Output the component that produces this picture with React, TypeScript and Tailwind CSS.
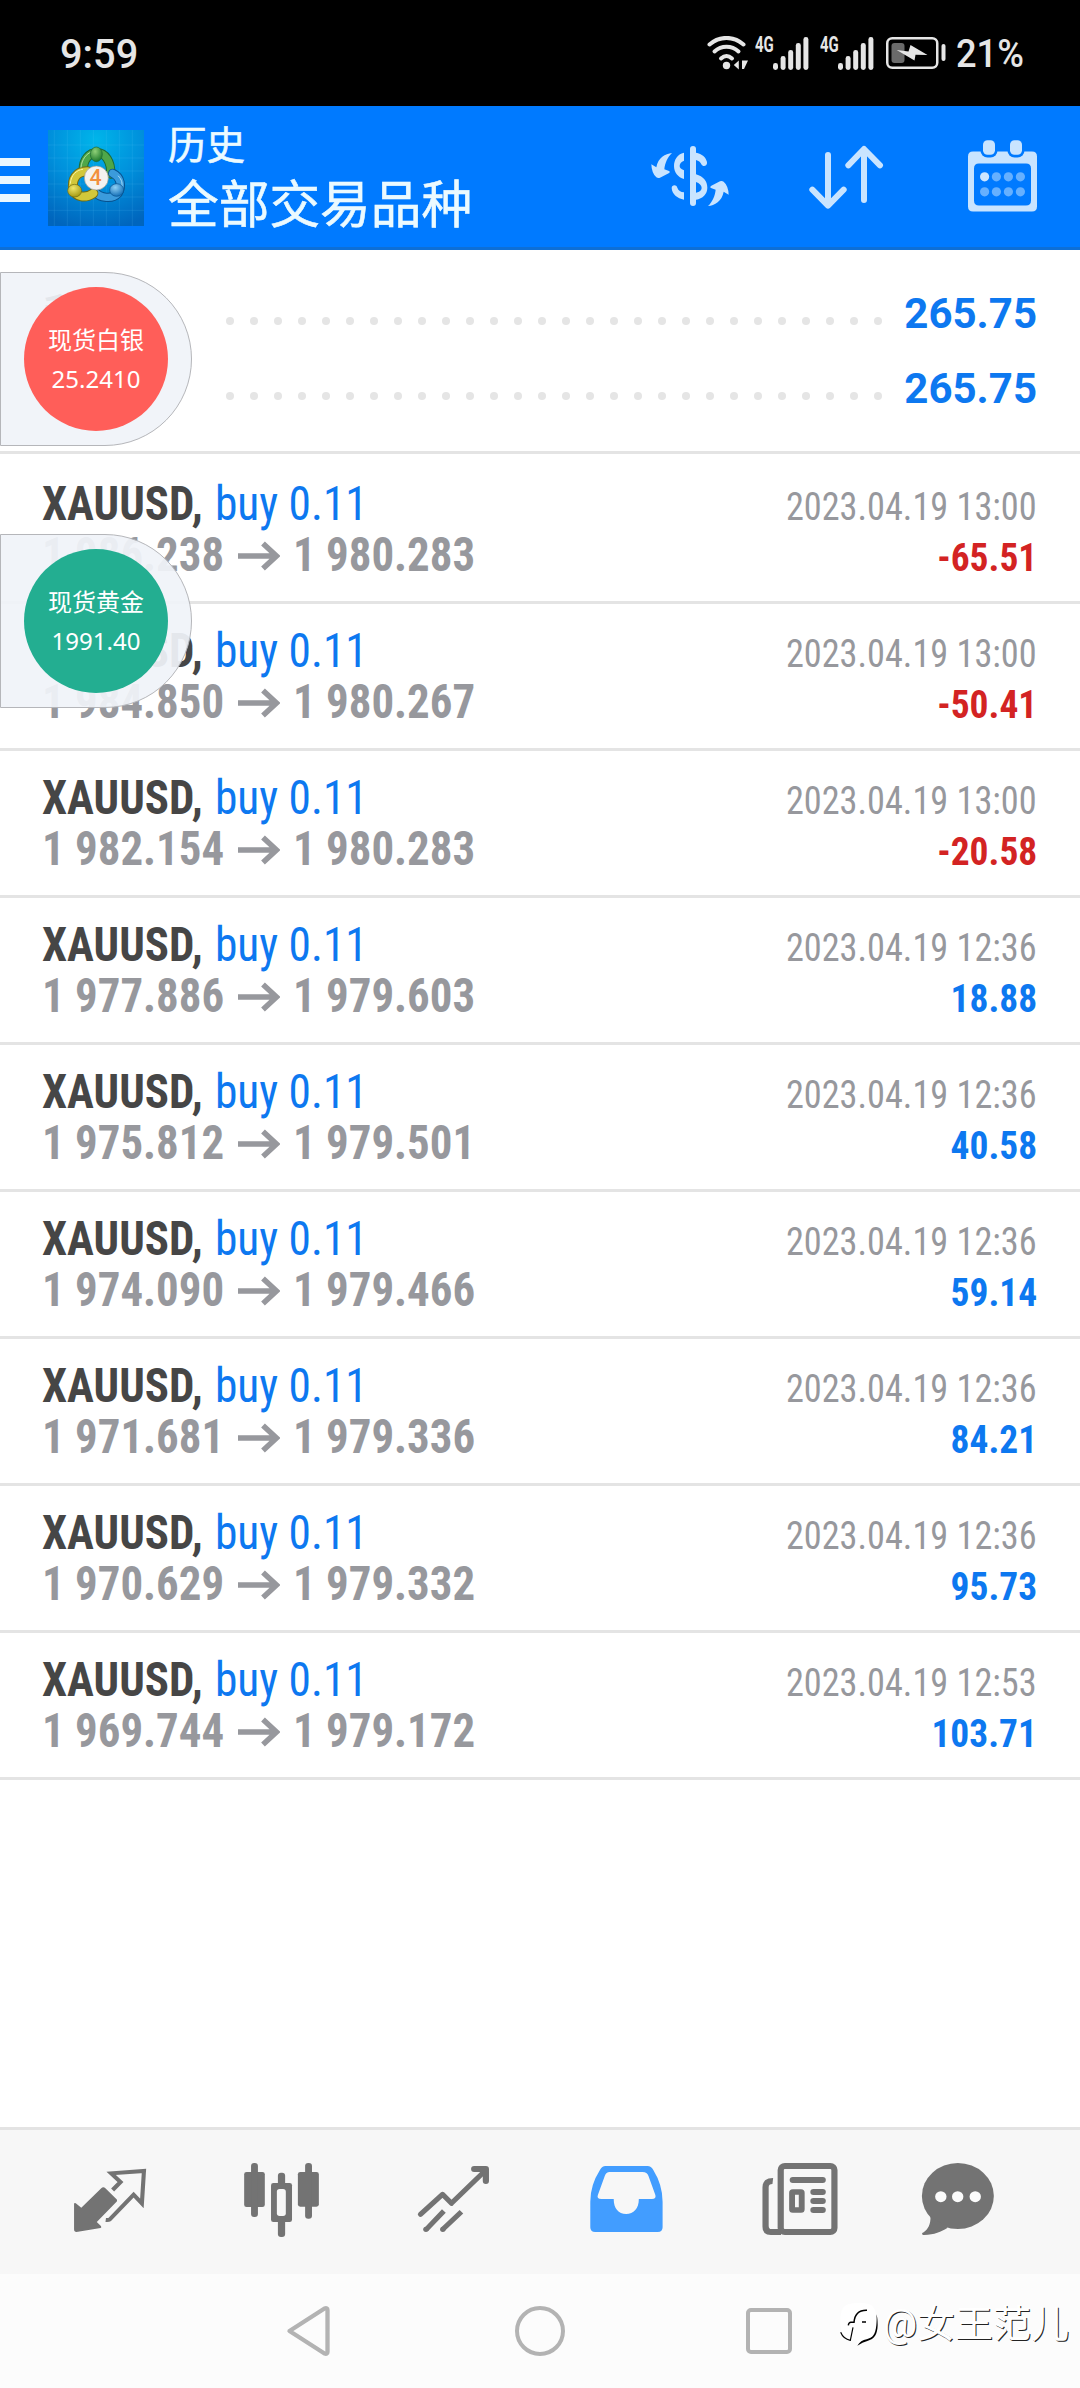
import clsx from "clsx";
import type { ReactNode } from "react";

type Deal = {
  open: string;
  close: string;
  time: string;
  profit: string;
};

const deals: Deal[] = [
  { open: "1 986.238", close: "1 980.283", time: "2023.04.19 13:00", profit: "-65.51" },
  { open: "1 984.850", close: "1 980.267", time: "2023.04.19 13:00", profit: "-50.41" },
  { open: "1 982.154", close: "1 980.283", time: "2023.04.19 13:00", profit: "-20.58" },
  { open: "1 977.886", close: "1 979.603", time: "2023.04.19 12:36", profit: "18.88" },
  { open: "1 975.812", close: "1 979.501", time: "2023.04.19 12:36", profit: "40.58" },
  { open: "1 974.090", close: "1 979.466", time: "2023.04.19 12:36", profit: "59.14" },
  { open: "1 971.681", close: "1 979.336", time: "2023.04.19 12:36", profit: "84.21" },
  { open: "1 970.629", close: "1 979.332", time: "2023.04.19 12:36", profit: "95.73" },
  { open: "1 969.744", close: "1 979.172", time: "2023.04.19 12:53", profit: "103.71" },
];

const Signal = () => (
  <div className="flex h-[33px] gap-[1px]">
    <span className="w-[17px] origin-left scale-x-[0.68] text-[22px] leading-[15px] font-bold">4G</span>
    <svg width="36" height="33" viewBox="0 0 36 33" fill="currentColor">
      <rect x="0" y="26" width="5" height="7" rx="2.4" />
      <rect x="7.6" y="19" width="5" height="14" rx="2.4" />
      <rect x="15.2" y="13" width="5" height="20" rx="2.4" />
      <rect x="22.8" y="6" width="5" height="27" rx="2.4" />
      <rect x="30.4" y="0" width="5" height="33" rx="2.4" />
    </svg>
  </div>
);

const StatusBar = () => (
  <div className="flex h-[106px] items-center justify-between bg-black pr-[56px] pl-[60px] text-[#e6e6e6]">
    <span className="mt-[3px] origin-left scale-x-[0.97] text-[41px] leading-none font-medium">9:59</span>
    <div className="flex items-center">
      <svg width="42" height="34" viewBox="0 0 42 34" className="mr-[6px]">
        <g fill="none" stroke="currentColor" strokeWidth="4" strokeLinecap="round">
          <path d="M2.5 8.5C12.5-.3 26.5-.3 36.5 8.5" />
          <path d="M7.5 15.5C14.5 9.3 24.5 9.3 31.5 15.5" />
          <path d="M14 22.5C17.5 19.3 21.5 19.3 25 22.5" />
        </g>
        <circle cx="19.5" cy="29.5" r="3.7" fill="currentColor" />
        <path d="M31.8 24.5v9l-5-4.5zM35 24.500h6l-4 8.500h-2z" fill="currentColor" />
      </svg>
      <Signal />
      <div className="w-[11px]" />
      <Signal />
      <svg width="60" height="32" viewBox="0 0 60 32" className="ml-[12px]">
        <rect x="1.25" y="1.25" width="50" height="29.5" rx="5" fill="none" stroke="currentColor" strokeWidth="2.5" />
        <rect x="5.5" y="6" width="13" height="20" rx="3" fill="#6a6a6a" />
        <rect x="55.5" y="7" width="4" height="17" rx="2" fill="currentColor" />
        <path d="M10.7 13L22.5 14.5L24.5 8L41.5 18L29.5 17.8L28.5 23.5Z" fill="currentColor" />
      </svg>
      <span className="mt-[3px] ml-[10px] w-[68px] origin-left scale-x-[0.93] text-[39px] leading-none font-medium">21%</span>
    </div>
  </div>
);

const AppLogo = () => (
  <svg width="96" height="96" viewBox="0 0 288 288">
    <defs>
      <radialGradient id="sky" cx="0.5" cy="0.1" r="0.95">
        <stop offset="0" stopColor="#00b5ea" />
        <stop offset="0.5" stopColor="#0090dc" />
        <stop offset="1" stopColor="#0065bd" />
      </radialGradient>
      <radialGradient id="green" cx="0.4" cy="0.3" r="0.7">
        <stop offset="0" stopColor="#8fd078" />
        <stop offset="1" stopColor="#1f7a2c" />
      </radialGradient>
      <radialGradient id="yellow" cx="0.4" cy="0.3" r="0.7">
        <stop offset="0" stopColor="#f0e76a" />
        <stop offset="1" stopColor="#a59a14" />
      </radialGradient>
      <radialGradient id="blue" cx="0.4" cy="0.3" r="0.7">
        <stop offset="0" stopColor="#8fd0f5" />
        <stop offset="1" stopColor="#1570b8" />
      </radialGradient>
    </defs>
    <rect width="288" height="288" fill="url(#sky)" />
    <path
      d="M19 0V288M58 0V288M97 0V288M136 0V288M175 0V288M214 0V288M253 0V288M0 45H288M0 84H288M0 123H288M0 162H288M0 201H288M0 241H288"
      stroke="#6cd0ff"
      strokeOpacity="0.2"
      strokeWidth="2"
    />
    <g fill="none" strokeLinecap="round">
      <path d="M106 122C104 88 125 68 146 68C172 68 190 95 188 132" stroke="#1c6a35" strokeWidth="28" />
      <path d="M106 122C104 88 125 68 146 68C172 68 190 95 188 132" stroke="#4fa749" strokeWidth="22" />
      <path d="M194 130C220 142 222 170 210 190C195 208 155 206 140 184" stroke="#08518e" strokeWidth="28" />
      <path d="M194 130C220 142 222 170 210 190C195 208 155 206 140 184" stroke="#3b9bdc" strokeWidth="22" />
      <path d="M118 124C85 124 70 148 76 178C84 202 112 206 136 190" stroke="#706b10" strokeWidth="30" />
      <path d="M118 124C85 124 70 148 76 178C84 202 112 206 136 190" stroke="#d2c73a" strokeWidth="24" />
      <path d="M99 112C101 88 116 70 130 66" stroke="#b4e0a0" strokeWidth="3" />
      <path d="M67 160C69 136 84 120 104 118" stroke="#f8f3a0" strokeWidth="3" />
      <path d="M211 138C222 150 224 160 221 172" stroke="#a8dcfa" strokeWidth="3" />
    </g>
    <ellipse cx="145" cy="73" rx="18" ry="22" fill="url(#green)" stroke="#1c6a35" strokeWidth="2" />
    <ellipse cx="80" cy="182" rx="21" ry="19" fill="url(#yellow)" stroke="#706b10" strokeWidth="2" />
    <ellipse cx="206" cy="180" rx="21" ry="19" fill="url(#blue)" stroke="#08518e" strokeWidth="2" />
    <circle cx="145" cy="144" r="36" fill="#f4f2f0" stroke="#9b9990" strokeWidth="2" />
    <text x="143" y="166" textAnchor="middle" fontSize="64" fontWeight="500" fill="#f2903e" fontFamily="Roboto, sans-serif">
      4
    </text>
  </svg>
);

const Header = () => (
  <header className="flex h-[144px] border-b-[3px] border-[#0d6fd6] bg-[#007aff] text-[#c9e4ff]">
    <div className="mt-[52px] flex w-[30px] flex-col gap-[10px]">
      <div className="h-2 bg-[#ebf7ff]" />
      <div className="h-2 bg-[#ebf7ff]" />
      <div className="h-2 bg-[#ebf7ff]" />
    </div>
    <div className="mt-6 ml-[18px]">
      <AppLogo />
    </div>
    <div className="mt-[15px] ml-[24px] flex-1 text-[#ebfaff] [-webkit-text-stroke:0.6px]">
      <div className="text-[38.5px] leading-[50px]">历史</div>
      <div className="mt-[2px] text-[50.7px] leading-[66px]">全部交易品种</div>
    </div>
    <svg width="82" height="66" viewBox="60 72 246 198" className="mt-[38px]" fill="currentColor">
      <rect x="180" y="78" width="18" height="180" rx="9" />
      <path d="M162 98C142 102 132 120 132 138C132 157 144 172 162 177V151C152 147 149 143 149 138C149 131 153 125 162 122Z" />
      <path d="M198 98C216 101 228 112 231 126C233 138 219 143 214 133C211 126 206 122 198 120Z" />
      <path
        d="M198 163C220 169 232 184 232 203C232 222 218 236 198 239ZM198 186V218C209 216 215 211 215 204C215 196 208 190 198 186Z"
        fillRule="evenodd"
      />
      <path d="M125 204C125 194 139 192 142 203C145 212 152 216 162 217V239C142 236 126 222 125 204Z" />
      <path id="turn" d="M126 99C106 101 84 113 79 142L64 133Q65 160 79 172Q84 175 90 173L116 160Q122 156 117 153L103 148C105 130 112 112 126 99Z" />
      <use href="#turn" transform="rotate(180 180 178.5)" />
    </svg>
    <svg
      width="76"
      height="66"
      viewBox="534 72 228 198"
      className="mt-[38px] ml-[76px]"
      fill="none"
      stroke="currentColor"
      strokeWidth="18"
      strokeLinecap="round"
      strokeLinejoin="round"
    >
      <path d="M594 105V256M547 209L594 257L641 209" />
      <path d="M702 240V89M655 136L702 87L750 136" />
    </svg>
    <svg width="70" height="72" viewBox="968 140.5 70 72" className="mt-[34px] mr-[42px] ml-[84px]">
      <path
        d="M973 152H1032Q1037 152 1037 157V207Q1037 212 1032 212H973Q968 212 968 207V157Q968 152 973 152ZM979 164Q974 164 974 169V201Q974 206 979 206H1026Q1031 206 1031 201V169Q1031 164 1026 164Z"
        fill="currentColor"
        fillRule="evenodd"
      />
      {[989, 1016].map((x) => (
        <g key={x}>
          <rect x={x - 8.5} y="138" width="17" height="20" rx="7" fill="#007aff" />
          <rect x={x - 6} y="140.7" width="12" height="14.5" rx="4.5" fill="currentColor" />
        </g>
      ))}
      {[984.6, 996.4, 1008.4, 1020.4].map((x, i) => (
        <g key={x} fill="#66b0ff">
          <circle cx={x} cy="177.3" r="4.6" fill={i === 0 ? "#cce5ff" : undefined} />
          <circle cx={x} cy="192.3" r="4.6" />
        </g>
      ))}
    </svg>
  </header>
);

const SummaryRow = ({ label, value }: { label: string; value: string }) => (
  <div className="flex h-[75px] items-center pr-[43px] pl-[44px]">
    <span className="w-[182px] text-[38px] font-bold text-[#464646]">{label}</span>
    <div className="mt-[15px] flex w-[656px] justify-between">
      {Array.from({ length: 28 }, (_, i) => (
        <span key={i} className="size-[7.5px] rounded-full bg-[#e5e5e5]" />
      ))}
    </div>
    <span className="flex-1 text-right text-[42px] leading-none font-bold text-[#0d78f0]">{value}</span>
  </div>
);

const DealRow = ({ deal }: { deal: Deal }) => (
  <li className="flex h-[147px] justify-between border-b-[3px] border-[#e4e4e4] pr-[43px] pl-[42px] leading-[51px] font-stretch-75%">
    <div className="pt-[21px] text-[48px] whitespace-nowrap">
      <div className="flex h-[51px]">
        <span className="w-[173px] origin-left scale-x-[0.935] font-bold text-[#464646]">XAUUSD,</span>
        <span className="origin-left scale-x-[0.945] text-[#0d78f0]">buy 0.11</span>
      </div>
      <div className="flex h-[51px] font-bold text-[#97989d]">
        <span className="w-[196px] origin-left scale-x-[0.935]">{deal.open}</span>
        <svg width="42" height="30" viewBox="0 0 42 30" className="mt-[12px]" fill="none" stroke="currentColor" strokeWidth="5.5">
          <path d="M0 15H38M25 2.5L38.5 15L25 27.5" />
        </svg>
        <span className="ml-[13px] origin-left scale-x-[0.935]">{deal.close}</span>
      </div>
    </div>
    <div className="flex flex-col items-end pt-[25px] text-[39px] whitespace-nowrap">
      <span className="origin-right scale-x-[0.93] text-[#97989d]">{deal.time}</span>
      <span
        className={clsx(
          "origin-right scale-x-[0.96] font-bold",
          deal.profit.startsWith("-") ? "text-[#d32323]" : "text-[#0d78f0]"
        )}
      >
        {deal.profit}
      </span>
    </div>
  </li>
);

const QuoteBadge = ({ name, price, className }: { name: string; price: string; className: string }) => (
  <div className="flex h-[174px] w-[192px] items-center rounded-r-[87px] border border-[#b5b6ba] bg-[#f0f3f9]/93 pl-[23px]">
    <div className={clsx("flex size-36 flex-col items-center justify-center rounded-full text-[24px] text-white", className)}>
      <span className="mt-[2px] leading-[36px]">{name}</span>
      <span className="mt-[2px] font-['Noto_Sans',sans-serif] leading-[36px]">{price}</span>
    </div>
  </div>
);

// every tab drawing shares the same cell, the box is stretched to 90x80
const TabIcon = ({ x, className, children }: { x: number; className?: string; children: ReactNode }) => (
  <svg
    width="90"
    height="80"
    viewBox={`${x} 150 261.4 240`}
    preserveAspectRatio="none"
    fill="currentColor"
    className={className}
  >
    {children}
  </svg>
);

const TabBar = () => (
  <nav className="flex h-[147px] gap-[82px] border-t-[3px] border-[#e3e3e3] bg-[#f7f7f7] pt-[30px] pl-[65px] text-[#737373]">
    <TabIcon x={188.7}>
      <path d="M215 281Q216 277 220 280L236 293L294 235Q300 228 306 235L337 266Q343 271 337 277L281 336L293 348Q296 352 292 354L222 366Q215 366 215 358Z" />
      <path d="M327 240L350 216L323 190L418 183L412 280L388 254L319 328Q315 331 307 330" fill="none" stroke="currentColor" strokeWidth="12" />
    </TabIcon>
    <TabIcon x={688.2}>
      <rect x="709" y="186" width="60" height="105" rx="7" />
      <rect x="729" y="159" width="20" height="162" rx="9" />
      <rect x="865" y="186" width="61" height="104" rx="7" />
      <rect x="886" y="159" width="20" height="167" rx="9" />
      <rect x="787" y="219" width="61" height="117" rx="7" />
      <rect x="807" y="188" width="21" height="193" rx="9" />
      <rect x="804" y="237" width="26" height="81" rx="8" fill="#f7f7f7" />
    </TabIcon>
    <TabIcon x={1187.7}>
      <g fill="none" stroke="currentColor" strokeWidth="15" strokeLinejoin="round">
        <path d="M1221 313L1285 253L1311 280L1408 183" strokeLinecap="round" />
        <path d="M1377 177H1411V213" strokeWidth="18" strokeLinecap="round" />
        <path d="M1238 358L1289 303M1286 358L1340 305" />
      </g>
      <circle cx="1237" cy="358" r="8" />
      <circle cx="1286" cy="358" r="8" />
    </TabIcon>
    <TabIcon x={119}>
      <path
        d="M190 168H312Q323 168 329 180Q356 225 356 275V352Q356 366 342 366H160Q146 366 146 352V275Q146 225 174 180Q180 168 190 168ZM202 186Q192 186 188 198L168 255Q164 267 178 267H214C214 296 228 312 250 312C272 312 287 296 287 267H325Q338 267 335 255L315 198Q311 186 298 186Z"
        fill="#429dff"
        fillRule="evenodd"
      />
    </TabIcon>
    <TabIcon x={618.5}>
      <rect x="699" y="168" width="156" height="198" rx="12" fill="none" stroke="currentColor" strokeWidth="18" />
      <path d="M677 204Q646 204 646 232V350Q646 375 670 375H700V357H672Q664 357 664 347V232Q664 222 675 222Z" />
      <rect x="725" y="201" width="105" height="18" rx="9" />
      <rect x="732" y="246" width="28" height="54" rx="2" fill="none" stroke="currentColor" strokeWidth="17" strokeLinejoin="round" />
      <rect x="785" y="237" width="45" height="18" rx="9" />
      <rect x="785" y="264" width="45" height="18" rx="9" />
      <rect x="785" y="291" width="45" height="18" rx="9" />
    </TabIcon>
    <TabIcon x={1083.2} className="-ml-3">
      <ellipse cx="1213.5" cy="258" rx="104.5" ry="99" />
      <path d="M1130 316Q1135 320 1134 326C1133 350 1122 362 1110 369Q1108 375 1116 375C1145 374 1165 365 1184 353Z" />
      <g fill="#fbfbfb">
        <circle cx="1164" cy="260" r="16.5" />
        <circle cx="1213" cy="260" r="16.5" />
        <circle cx="1264" cy="260" r="16.5" />
      </g>
    </TabIcon>
  </nav>
);

const SystemNav = () => (
  <div className="relative flex h-[114px] items-center bg-[#fcfcfc] pl-[286px]">
    <svg width="44" height="52" viewBox="0 0 44 52" fill="none" stroke="#b3b3b3" strokeWidth="4.3" strokeLinejoin="round">
      <path d="M3.5 26L38.5 3.5Q41.5 2.5 41.5 5V47Q41.5 49.5 38.5 48.5Z" />
    </svg>
    <div className="ml-[185px] size-[50px] rounded-full border-[4.5px] border-[#b3b3b3]" />
    <div className="ml-[181px] size-[46px] rounded-[5px] border-[4.5px] border-[#b3b3b3]" />
    <div className="absolute top-[24px] left-[839px] flex items-center text-white">
      <svg width="40" height="45" viewBox="15 35 120 135">
        <path d="M75 38C112 37 127 46 127 90C127 132 118 144 98 148Q84 151 72 163L68 148C32 146 19 134 19 92C19 48 32 39 75 38Z" fill="#fff" />
        <path d="M127 72Q129 82 127 105C124 134 116 142 98 147Q80 150 70 166Q86 156 100 152C122 146 130 132 131 105Q131 80 127 72Z" fill="#000" />
        <path d="M20 126Q28 146 49 150L57 111" fill="none" stroke="#000" strokeWidth="3.5" />
        <path d="M43 105Q44 95 52 96H60C62 74 72 59 99 60M84 95H96" fill="none" stroke="#000" strokeWidth="4.5" />
      </svg>
      <span className="ml-[4px] text-[38px] leading-[52px] whitespace-nowrap [text-shadow:1px_1px_0_#222]">@女王范儿</span>
    </div>
  </div>
);

export default function App() {
  return (
    <div className="relative flex h-[2388px] w-[1080px] flex-col overflow-hidden bg-white font-['Roboto','Noto_Sans_CJK_SC',sans-serif]">
      <StatusBar />
      <Header />
      <main className="flex-1">
        <section className="h-[204px] border-b-[3px] border-[#e4e4e4] pt-[26px]">
          <SummaryRow label="利润:" value="265.75" />
          <SummaryRow label="余额:" value="265.75" />
        </section>
        <ul className="pt-[3px]">
          {deals.map((deal) => (
            <DealRow key={deal.open} deal={deal} />
          ))}
        </ul>
      </main>
      <TabBar />
      <SystemNav />
      <div className="absolute top-[272px] left-0 flex flex-col gap-[88px]">
        <QuoteBadge name="现货白银" price="25.2410" className="bg-[#ff5e59]" />
        <QuoteBadge name="现货黄金" price="1991.40" className="bg-[#23ae91]" />
      </div>
    </div>
  );
}
